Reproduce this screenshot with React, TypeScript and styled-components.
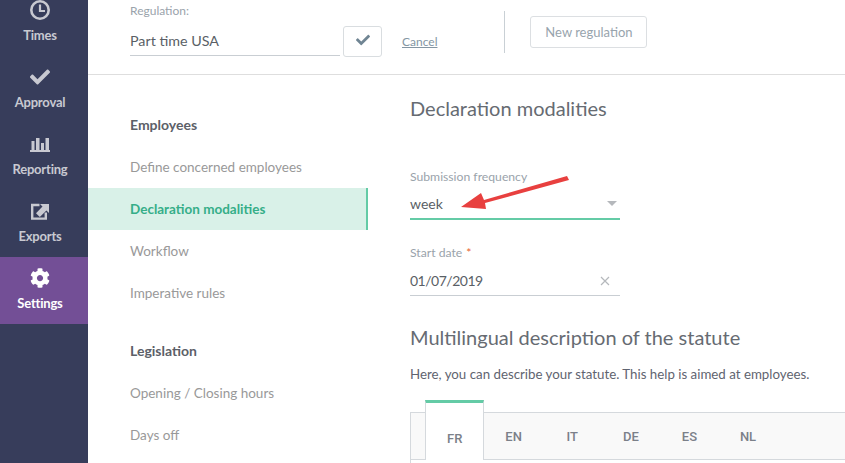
import { ReactNode } from 'react';
import styled, { createGlobalStyle } from 'styled-components';
import { FaCheck, FaCog } from 'react-icons/fa';

const TEXT_FONT = '"Lato", "Liberation Sans", sans-serif';

const GlobalStyle = createGlobalStyle`
  html, body {
    margin: 0;
    padding: 0;
    background: #fff;
    overflow: hidden;
  }
  * {
    box-sizing: border-box;
  }
`;

const Page = styled.div`
  display: flex;
  width: 845px;
  height: 463px;
  overflow: hidden;
  font-family: ${TEXT_FONT};
  color: #5f6470;
`;

const Sidebar = styled.nav`
  flex: 0 0 88px;
  background: #373d5b;
  overflow: hidden;
`;

const SideList = styled.div`
  margin-top: -11px;
`;

const SideItem = styled.div<{ $active?: boolean }>`
  height: 67px;
  display: flex;
  flex-direction: column;
  align-items: center;
  padding: 10px 8px 0 0;
  background: ${(p) => (p.$active ? '#734f96' : 'transparent')};
  color: ${(p) => (p.$active ? '#fff' : '#c8c9d1')};
`;

const SideIcon = styled.div`
  height: 22px;
  display: flex;
  align-items: center;
  justify-content: center;
  font-size: 20px;
`;

const SideLabel = styled.span`
  margin-top: 6px;
  font-size: 13px;
  font-weight: 700;
  line-height: 16px;
  letter-spacing: -0.2px;
`;

const Main = styled.main`
  flex: 1;
  min-width: 0;
  display: flex;
  flex-direction: column;
`;

const TopBar = styled.header`
  height: 75px;
  flex: none;
  display: flex;
  border-bottom: 1px solid #dedede;
  padding: 3px 0 0 42px;
`;

const RegulationField = styled.div`
  width: 210px;
`;

const SmallLabel = styled.div`
  font-size: 12px;
  line-height: 15px;
  color: #9aa3ab;
`;

const RegulationInput = styled.div`
  margin-top: 8px;
  height: 30px;
  border-bottom: 1px solid #c9ced3;
  font-size: 14.3px;
  line-height: 30px;
  color: #5a5f66;
`;

const CheckButton = styled.button`
  margin: 23px 0 0 3px;
  width: 39px;
  height: 31px;
  display: flex;
  align-items: center;
  justify-content: center;
  background: #fff;
  border: 1px solid #d9dde0;
  border-radius: 3px;
  color: #708593;
  font-size: 14px;
  padding: 0 0 3px;
`;

const CancelLink = styled.a`
  margin: 31px 0 0 20px;
  font-size: 12px;
  line-height: 16px;
  height: 16px;
  color: #8496a3;
  text-decoration: underline;
`;

const Divider = styled.div`
  width: 1px;
  height: 42px;
  margin: 8px 0 0 67px;
  background: #c9d0d5;
`;

const NewButton = styled.button`
  margin: 13px 0 0 25px;
  width: 117px;
  height: 32px;
  background: #fff;
  border: 1px solid #dcdfe2;
  border-radius: 3px;
  font-family: ${TEXT_FONT};
  font-size: 13px;
  color: #98a4ad;
  padding: 0;
`;

const Body = styled.div`
  flex: 1;
  min-height: 0;
  display: flex;
`;

const SectionNav = styled.aside`
  flex: 0 0 280px;
  padding-top: 29px;
`;

const NavHeading = styled.div`
  height: 42px;
  padding-left: 42px;
  font-size: 14px;
  font-weight: 700;
  line-height: 42px;
  color: #5c6068;
`;

const LegislationHeading = styled(NavHeading)`
  margin-top: 16px;
`;

const NavItem = styled.div<{ $active?: boolean }>`
  height: 42px;
  padding-left: 42px;
  font-size: 13.5px;
  line-height: 42px;
  font-weight: ${(p) => (p.$active ? 700 : 400)};
  color: ${(p) => (p.$active ? '#35ae88' : '#999')};
  background: ${(p) => (p.$active ? '#d9f1e8' : 'transparent')};
  border-right: ${(p) => (p.$active ? '2px solid #64cba6' : 'none')};
`;

const Content = styled.section`
  flex: 1;
  min-width: 0;
  padding: 20px 0 0 42px;
  position: relative;
`;

const Heading = styled.h2`
  margin: 0;
  font-size: 20px;
  font-weight: 400;
  line-height: 26px;
  color: #666b72;
`;

const Field = styled.div`
  width: 210px;
`;

const FrequencyField = styled(Field)`
  margin-top: 48px;
`;

const DateField = styled(Field)`
  margin-top: 25px;
`;

const FieldLabel = styled.div`
  font-size: 12.2px;
  line-height: 16px;
  color: #9aa3ab;
`;

const Required = styled.span`
  color: #e8622c;
  margin-left: 4px;
`;

const FieldValue = styled.div<{ $focused?: boolean }>`
  margin-top: ${(p) => (p.$focused ? '4px' : '5px')};
  height: ${(p) => (p.$focused ? '31px' : '30px')};
  display: flex;
  justify-content: space-between;
  align-items: center;
  font-size: 14px;
  color: #5a5f66;
  border-bottom: ${(p) => (p.$focused ? '2px solid #64cba6' : '1px solid #c9ced3')};
`;

const DateValue = styled(FieldValue)`
  letter-spacing: -0.5px;
`;

const Caret = styled.span`
  width: 0;
  height: 0;
  margin-right: 3px;
  border-left: 5px solid transparent;
  border-right: 5px solid transparent;
  border-top: 5px solid #b5b8bc;
`;

const ClearIcon = styled.svg`
  width: 10px;
  height: 10px;
  margin-right: 10px;
  stroke: #b5b8bc;
  stroke-width: 1.2;
`;

const SecondHeading = styled(Heading)`
  margin-top: 28px;
`;

const HelpText = styled.p`
  margin: 15px 0 0;
  font-size: 13.3px;
  line-height: 18px;
  color: #5f6470;
  white-space: nowrap;
`;

const TabStrip = styled.div`
  margin-top: 29px;
  height: 48px;
  display: flex;
  padding-left: 14px;
  background: #f9f9f9;
  border: 1px solid #d5d9dd;
  border-right: none;
`;

const Tab = styled.div<{ $active?: boolean }>`
  flex: none;
  min-width: 58.6px;
  padding: ${(p) => (p.$active ? '13px 21px 0' : '0 21px')};
  height: ${(p) => (p.$active ? '60px' : '100%')};
  margin-top: ${(p) => (p.$active ? '-13px' : '0')};
  display: flex;
  justify-content: center;
  align-items: center;
  font-family: Roboto, "Liberation Sans", sans-serif;
  font-size: 13px;
  font-weight: 500;
  color: #7b8089;
  background: ${(p) => (p.$active ? '#fff' : 'transparent')};
  border-top: ${(p) => (p.$active ? '3px solid #64cba6' : 'none')};
  border-left: ${(p) => (p.$active ? '1px solid #d5d9dd' : 'none')};
  border-right: ${(p) => (p.$active ? '1px solid #d5d9dd' : 'none')};
`;

const TabPanel = styled.div`
  height: 20px;
  border-left: 1px solid #d5d9dd;
`;

const Arrow = styled.svg`
  position: absolute;
  left: 90px;
  top: 100px;
  width: 115px;
  height: 40px;
`;

function ClockIcon() {
  return (
    <svg width="22" height="22" viewBox="0 0 22 22" fill="none" stroke="currentColor">
      <circle cx="11" cy="11" r="8.7" strokeWidth="2.6" />
      <path d="M11 5.5v6.5h5" strokeWidth="2.2" />
    </svg>
  );
}

function ReportingIcon() {
  return (
    <svg width="20" height="18" viewBox="0 0 20 18" fill="currentColor">
      <rect x="1.5" y="6" width="3" height="9" />
      <rect x="6" y="3" width="3.5" height="12" />
      <rect x="11" y="8" width="3" height="7" />
      <rect x="15.5" y="3" width="3.5" height="12" />
      <rect x="0" y="15" width="20" height="2" />
    </svg>
  );
}

function ExportIcon() {
  return (
    <svg width="20" height="20" viewBox="0 0 20 20">
      <path d="M9.5 4H2.2v13.6h13.6v-6" fill="none" stroke="currentColor" strokeWidth="2.4" />
      <path d="M6 12.2L12.5 5.6 10 3h9v9l-2.6-2.6L9.8 16z" fill="currentColor" />
    </svg>
  );
}

const sideItems: { label: string; icon: ReactNode; active?: boolean }[] = [
  { label: 'Times', icon: <ClockIcon /> },
  { label: 'Approval', icon: <FaCheck /> },
  { label: 'Reporting', icon: <ReportingIcon /> },
  { label: 'Exports', icon: <ExportIcon /> },
  { label: 'Settings', icon: <FaCog />, active: true },
];

const languages = ['FR', 'EN', 'IT', 'DE', 'ES', 'NL'];

export default function App() {
  return (
    <Page>
      <GlobalStyle />
      <Sidebar>
        <SideList>
          {sideItems.map((item) => (
            <SideItem key={item.label} $active={item.active}>
              <SideIcon>{item.icon}</SideIcon>
              <SideLabel>{item.label}</SideLabel>
            </SideItem>
          ))}
        </SideList>
      </Sidebar>
      <Main>
        <TopBar>
          <RegulationField>
            <SmallLabel>Regulation:</SmallLabel>
            <RegulationInput>Part time USA</RegulationInput>
          </RegulationField>
          <CheckButton>
            <FaCheck />
          </CheckButton>
          <CancelLink>Cancel</CancelLink>
          <Divider />
          <NewButton>New regulation</NewButton>
        </TopBar>
        <Body>
          <SectionNav>
            <NavHeading>Employees</NavHeading>
            <NavItem>Define concerned employees</NavItem>
            <NavItem $active>Declaration modalities</NavItem>
            <NavItem>Workflow</NavItem>
            <NavItem>Imperative rules</NavItem>
            <LegislationHeading>Legislation</LegislationHeading>
            <NavItem>Opening / Closing hours</NavItem>
            <NavItem>Days off</NavItem>
          </SectionNav>
          <Content>
            <Heading>Declaration modalities</Heading>
            <FrequencyField>
              <FieldLabel>Submission frequency</FieldLabel>
              <FieldValue $focused>
                week
                <Caret />
              </FieldValue>
            </FrequencyField>
            <DateField>
              <FieldLabel>
                Start date<Required>*</Required>
              </FieldLabel>
              <DateValue>
                01/07/2019
                <ClearIcon viewBox="0 0 10 10">
                  <path d="M1 1l8 8M9 1l-8 8" />
                </ClearIcon>
              </DateValue>
            </DateField>
            <SecondHeading>Multilingual description of the statute</SecondHeading>
            <HelpText>Here, you can describe your statute. This help is aimed at employees.</HelpText>
            <TabStrip>
              {languages.map((lang) => (
                <Tab key={lang} $active={lang === 'FR'}>
                  {lang}
                </Tab>
              ))}
            </TabStrip>
            <TabPanel />
            <Arrow viewBox="0 0 115 40">
              <path d="M3 32L23 18 26 25 109 1 111 5 27 28 28 34Z" fill="#e8403f" />
            </Arrow>
          </Content>
        </Body>
      </Main>
    </Page>
  );
}
